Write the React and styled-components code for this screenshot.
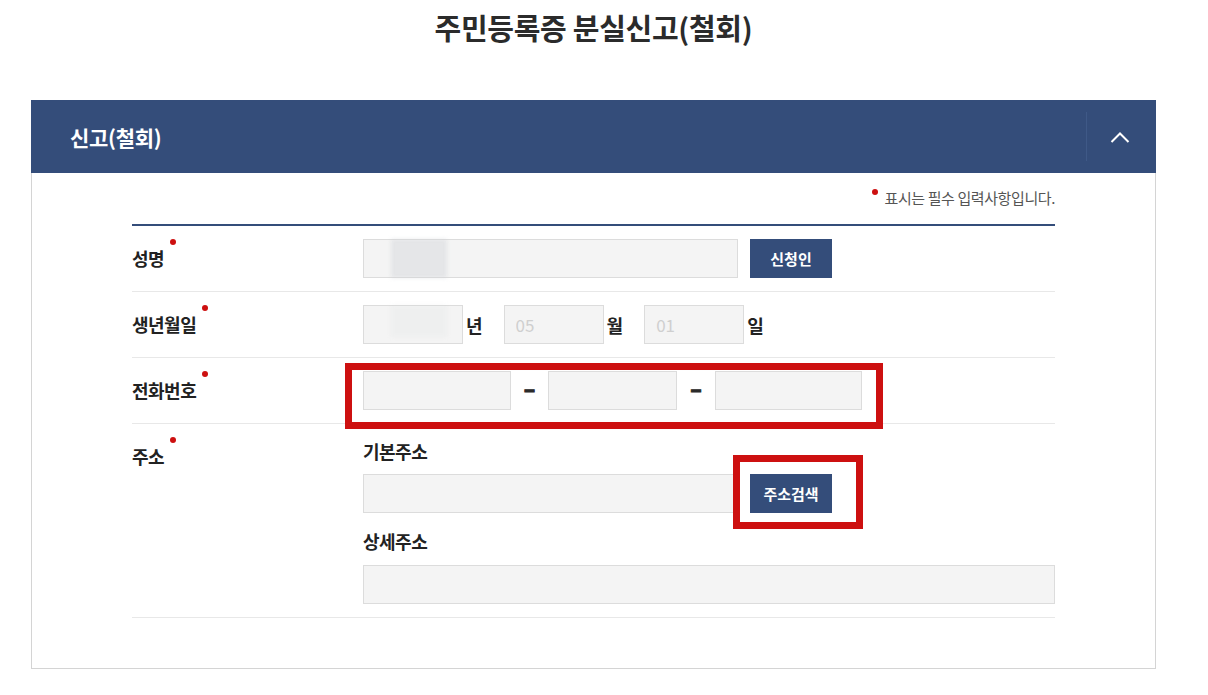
import React from 'react';
import styled, { createGlobalStyle } from 'styled-components';

const NAVY = '#344d7a';
const RED = '#cd1010';

const GlobalStyle = createGlobalStyle`
  html, body { margin: 0; padding: 0; background: #fff; }
  body { font-family: "Noto Sans CJK KR", "Noto Sans", sans-serif; color: #222; }
  * { box-sizing: border-box; }
`;

const Page = styled.div`
  width: 1125px;
  margin-left: 31px;
  padding-top: 7px;
`;

const Title = styled.h1`
  margin: 0 0 53px;
  text-align: center;
  font-size: 29px;
  line-height: 40px;
  font-weight: 700;
  color: #2b2b2b;
  letter-spacing: -0.3px;
`;

const PanelHeader = styled.div`
  display: flex;
  align-items: center;
  height: 73px;
  background: ${NAVY};
  color: #fff;
`;

const PanelTitle = styled.h2`
  flex: 1;
  margin: 0;
  padding-left: 39px;
  font-size: 21px;
  font-weight: 700;
  letter-spacing: -0.3px;
`;

const Toggle = styled.button`
  width: 70px;
  height: 49px;
  border: 0;
  border-left: 1px solid #3f5987;
  background: transparent;
  display: flex;
  align-items: center;
  justify-content: center;
  padding: 0 4px 0 0;
  cursor: pointer;
`;

const PanelBody = styled.div`
  border: 1px solid #d4d4d4;
  border-top: 0;
  padding: 15px 100px 50px;
`;

const Note = styled.p`
  margin: 0 0 16px;
  text-align: right;
  font-size: 15px;
  line-height: 20px;
  color: #555;
  letter-spacing: -0.4px;
  &::before {
    content: '';
    display: inline-block;
    width: 6px;
    height: 6px;
    border-radius: 50%;
    background: ${RED};
    margin-right: 7px;
    position: relative;
    top: -9px;
  }
`;

const FormTable = styled.div`
  border-top: 2px solid ${NAVY};
`;

const Row = styled.div`
  display: grid;
  grid-template-columns: 231px 692px;
  padding: 13px 0;
  border-bottom: 1px solid #e8e8e8;
`;

const Label = styled.div`
  align-self: start;
  font-size: 18px;
  line-height: 39px;
  font-weight: 700;
  color: #222;
  letter-spacing: -0.5px;
`;

const Required = styled.span`
  position: relative;
  display: inline-block;
  &::after {
    content: '';
    position: absolute;
    top: 0;
    right: -12px;
    width: 6px;
    height: 6px;
    border-radius: 50%;
    background: ${RED};
  }
`;

const Field = styled.div`
  position: relative;
  display: flex;
  align-items: center;
`;

const StackField = styled.div`
  display: flex;
  flex-direction: column;
  align-items: flex-start;
`;

const Input = styled.input`
  width: ${p => p.$w}px;
  height: 39px;
  margin: 0;
  padding: 0 11px;
  border: 1px solid #dcdcdc;
  background: #f4f4f4;
  font-family: inherit;
  font-size: 17px;
  color: #333;
  outline: none;
  &::placeholder { color: #cfcfcf; }
`;

const Button = styled.button`
  width: 82px;
  height: 39px;
  margin: 0;
  border: 0;
  background: ${NAVY};
  color: #fff;
  font-family: inherit;
  font-size: 15px;
  font-weight: 700;
  letter-spacing: 0;
  cursor: pointer;
`;

const ButtonWrap = styled.div`
  position: relative;
  margin-left: 12px;
  display: flex;
`;

const Unit = styled.span`
  font-size: 18px;
  font-weight: 700;
  color: #222;
  margin: 0 ${p => (p.$last ? 0 : 21)}px 0 3px;
`;

const Dash = styled.span`
  width: ${p => p.$w}px;
  text-align: center;
  font-size: 21px;
  font-weight: 900;
  color: #2a2a2a;
  -webkit-text-stroke: 1px #2a2a2a;
  line-height: 39px;
  position: relative;
  top: -2px;
`;

const SubLabel = styled.div`
  font-size: 18px;
  line-height: 24px;
  font-weight: 700;
  color: #222;
  letter-spacing: -0.5px;
  margin: ${p => p.$first ? '2px 0 11px' : '16px 0 12px'};
`;

const Annotation = styled.div`
  position: absolute;
  inset: ${p => p.$inset};
  border: 7px solid ${RED};
  pointer-events: none;
`;

const PrivacyBlur = styled.div`
  position: absolute;
  left: 28px;
  top: ${p => p.$top}px;
  width: 56px;
  height: ${p => p.$h}px;
  background: ${p => p.$bg};
  filter: blur(2px);
  pointer-events: none;
`;

const Chevron = () => (
  <svg width="20" height="12" viewBox="0 0 20 12" fill="none">
    <polyline points="1.5,11 10,2.5 18.5,11" stroke="#fff" strokeWidth="2" />
  </svg>
);

export default function App() {
  return (
    <>
      <GlobalStyle />
      <Page>
        <Title>주민등록증 분실신고(철회)</Title>
        <section>
          <PanelHeader>
            <PanelTitle>신고(철회)</PanelTitle>
            <Toggle aria-label="접기"><Chevron /></Toggle>
          </PanelHeader>
          <PanelBody>
            <Note>표시는 필수 입력사항입니다.</Note>
            <FormTable>
              <Row>
                <Label><Required>성명</Required></Label>
                <Field>
                  <Input $w={375} />
                  <PrivacyBlur $top={0} $h={39} $bg="rgba(200,202,208,0.35)" />
                  <ButtonWrap><Button>신청인</Button></ButtonWrap>
                </Field>
              </Row>
              <Row>
                <Label><Required>생년월일</Required></Label>
                <Field>
                  <Input $w={100} />
                  <PrivacyBlur $top={0} $h={32} $bg="rgba(200,202,208,0.12)" />
                  <Unit>년</Unit>
                  <Input $w={100} placeholder="05" />
                  <Unit>월</Unit>
                  <Input $w={100} placeholder="01" />
                  <Unit $last>일</Unit>
                </Field>
              </Row>
              <Row>
                <Label><Required>전화번호</Required></Label>
                <Field>
                  <Field>
                    <Input $w={148} />
                    <Dash $w={37}>–</Dash>
                    <Input $w={129} />
                    <Dash $w={38}>–</Dash>
                    <Input $w={147} />
                    <Annotation $inset="-8px -21px -19px -18px" />
                  </Field>
                </Field>
              </Row>
              <Row>
                <Label><Required>주소</Required></Label>
                <StackField>
                  <SubLabel $first>기본주소</SubLabel>
                  <Field>
                    <Input $w={375} />
                    <ButtonWrap>
                      <Button>주소검색</Button>
                      <Annotation $inset="-19px -31px -16px -17px" />
                    </ButtonWrap>
                  </Field>
                  <SubLabel>상세주소</SubLabel>
                  <Input $w={692} />
                </StackField>
              </Row>
            </FormTable>
          </PanelBody>
        </section>
      </Page>
    </>
  );
}
